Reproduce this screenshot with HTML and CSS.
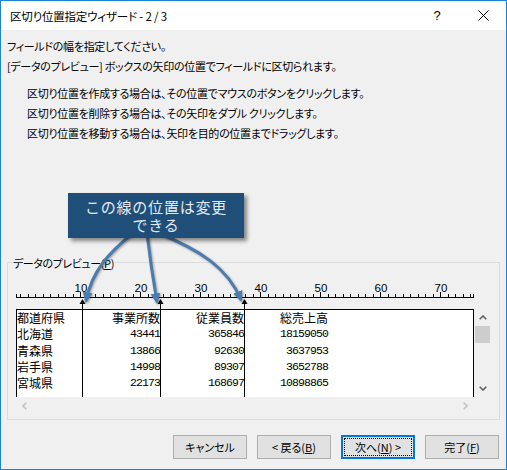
FILE: index.html
```html
<!DOCTYPE html>
<html lang="ja">
<head>
<meta charset="utf-8">
<title>区切り位置指定ウィザード</title>
<link rel="stylesheet" href="styles.css">
</head>
<body>
<div class="window">
  <div class="titlebar">
    <span class="title">区切り位置指定ウィザード - 2 / 3</span>
    <span class="tb-btn help">?</span>
    <span class="tb-btn close">
      <svg width="11" height="11" viewBox="0 0 11 11"><path d="M0.5 0.5L10.5 10.5M10.5 0.5L0.5 10.5" stroke="#000" stroke-width="1" fill="none"/></svg>
    </span>
  </div>
  <div class="body">
    <p class="line">フィールドの幅を指定してください。</p>
    <p class="line">[データのプレビュー] ボックスの矢印の位置でフィールドに区切られます。</p>
    <div class="instructions">
      <p class="line">区切り位置を作成する場合は、その位置でマウスのボタンをクリックします。</p>
      <p class="line">区切り位置を削除する場合は、その矢印をダブル クリックします。</p>
      <p class="line">区切り位置を移動する場合は、矢印を目的の位置までドラッグします。</p>
    </div>
    <div class="group">
      <div class="legend">データのプレビュー(<u>P</u>)</div>
      <div class="preview">
        <svg class="ruler" viewBox="16 278 458 31" width="458" height="31">
          <rect x="16" y="297" width="458" height="1" fill="#000"/>
          <path d="M16.5 294v3M20.5 294v3M28.5 294v3M35.5 294v3M43.5 294v3M50.5 294v3M58.5 294v3M65.5 294v3M73.5 294v3M88.5 294v3M95.5 294v3M103.5 294v3M110.5 294v3M118.5 294v3M125.5 294v3M133.5 294v3M148.5 294v3M155.5 294v3M163.5 294v3M170.5 294v3M178.5 294v3M185.5 294v3M193.5 294v3M208.5 294v3M215.5 294v3M223.5 294v3M230.5 294v3M238.5 294v3M245.5 294v3M253.5 294v3M268.5 294v3M275.5 294v3M283.5 294v3M290.5 294v3M298.5 294v3M305.5 294v3M313.5 294v3M328.5 294v3M335.5 294v3M343.5 294v3M350.5 294v3M358.5 294v3M365.5 294v3M373.5 294v3M388.5 294v3M395.5 294v3M403.5 294v3M410.5 294v3M418.5 294v3M425.5 294v3M433.5 294v3M448.5 294v3M455.5 294v3M463.5 294v3M470.5 294v3M473.5 294v3" stroke="#000" stroke-width="1"/>
          <path d="M80.5 292v5M140.5 292v5M200.5 292v5M260.5 292v5M320.5 292v5M380.5 292v5M440.5 292v5" stroke="#000" stroke-width="1"/>
          <g class="ruler-num">
            <text x="81" y="292">10</text>
            <text x="141" y="292">20</text>
            <text x="201" y="292">30</text>
            <text x="261" y="292">40</text>
            <text x="321" y="292">50</text>
            <text x="381" y="292">60</text>
            <text x="441" y="292">70</text>
          </g>
        </svg>
        <div class="grid">
          <div class="table">
            <div class="row"><span>都道府県</span><span>事業所数</span><span>従業員数</span><span>総売上高</span></div>
            <div class="row"><span>北海道</span><span class="n">43441</span><span class="n">365846</span><span class="n">18159050</span></div>
            <div class="row"><span>青森県</span><span class="n">13866</span><span class="n">92630</span><span class="n">3637953</span></div>
            <div class="row"><span>岩手県</span><span class="n">14998</span><span class="n">89307</span><span class="n">3652788</span></div>
            <div class="row"><span>宮城県</span><span class="n">22173</span><span class="n">168697</span><span class="n">10898865</span></div>
          </div>
          <div class="vscroll">
            <span class="sb-btn"><svg width="8" height="5" viewBox="0 0 8 5"><path d="M0.7 4.3L4 1L7.3 4.3" stroke="#606060" stroke-width="1.6" fill="none"/></svg></span>
            <span class="thumb"></span>
            <span class="sb-space"></span>
            <span class="sb-btn"><svg width="8" height="5" viewBox="0 0 8 5"><path d="M0.7 0.7L4 4L7.3 0.7" stroke="#606060" stroke-width="1.6" fill="none"/></svg></span>
          </div>
          <div class="hscroll">
            <span class="sb-btn"><svg width="5" height="8" viewBox="0 0 5 8"><path d="M4.3 0.7L1 4L4.3 7.3" stroke="#c2c2c2" stroke-width="1.6" fill="none"/></svg></span>
            <span class="sb-btn"><svg width="5" height="8" viewBox="0 0 5 8"><path d="M0.7 0.7L4 4L0.7 7.3" stroke="#c2c2c2" stroke-width="1.6" fill="none"/></svg></span>
          </div>
          <div class="corner"></div>
        </div>
        <svg class="seps" viewBox="16 278 475 136" width="475" height="136">
          <g fill="#000">
            <rect x="82" y="304" width="1" height="93"/>
            <rect x="160" y="304" width="1" height="93"/>
            <rect x="244" y="304" width="1" height="93"/>
            <polygon points="79.5,304 85.5,304 82.5,299"/>
            <polygon points="157.5,304 163.5,304 160.5,299"/>
            <polygon points="241.5,304 247.5,304 244.5,299"/>
          </g>
        </svg>
      </div>
    </div>
  </div>
  <div class="buttons">
    <span class="btn">キャンセル</span>
    <span class="btn">&lt; 戻る(<u>B</u>)</span>
    <span class="btn default">次へ(<u>N</u>) &gt;</span>
    <span class="btn">完了(<u>F</u>)</span>
  </div>
  <svg class="arrows" viewBox="0 0 507 470" width="507" height="470">
    <defs>
      <marker id="ah" viewBox="0 0 10 10" refX="8" refY="5" markerWidth="11" markerHeight="11" orient="auto" markerUnits="userSpaceOnUse">
        <path d="M0,0.5 L10,5 L0,9.5 z" fill="#4a7cae"/>
      </marker>
    </defs>
    <g class="arrow-lines" fill="none" stroke="#4a7cae" stroke-width="3">
      <path d="M133,233 C110,252 92,270 86,301" marker-end="url(#ah)"/>
      <path d="M147,233 Q151,268 157,302" marker-end="url(#ah)"/>
      <path d="M158,233 C200,250 228,268 241,300" marker-end="url(#ah)"/>
    </g>
  </svg>
  <div class="callout"><span class="callout-line">この線の位置は変更</span><span class="callout-line">できる</span></div>
</div>
</body>
</html>
```
FILE: styles.css
```css
body {
  margin: 0;
}

.window {
  position: relative;
  width: 507px;
  height: 470px;
  box-sizing: border-box;
  border: 1px solid #1883d7;
  background: #f0f0f0;
  font-family: "Noto Sans CJK JP", "Liberation Sans", sans-serif;
  font-size: 11px;
  font-feature-settings: "palt";
  letter-spacing: -0.3px;
  color: #000;
  overflow: hidden;
}

.titlebar {
  display: flex;
  align-items: center;
  height: 29px;
  background: #fff;
}

.title {
  flex: 1;
  padding-left: 9px;
  font-size: 11.5px;
  letter-spacing: -0.2px;
  white-space: nowrap;
}

.tb-btn {
  width: 46px;
  height: 29px;
  display: flex;
  align-items: center;
  justify-content: center;
}

.help {
  font-family: "Liberation Sans", sans-serif;
  font-size: 13px;
}

.body {
  padding: 6px 6px 0;
}

.line {
  margin: 0;
  line-height: 20px;
  white-space: nowrap;
}

.instructions {
  margin-top: 7px;
  padding-left: 20px;
}

.group {
  margin-top: 119px;
  height: 158px;
  box-sizing: border-box;
  border: 1px solid #dcdcdc;
  padding: 0 8px;
}

.legend {
  width: fit-content;
  margin: -7px 0 0 -4px;
  padding: 0 1px;
  line-height: 14px;
  letter-spacing: -0.4px;
  background: #f0f0f0;
}

.preview {
  position: relative;
  margin-top: 8px;
  width: 475px;
}

.ruler {
  display: block;
}

.ruler-num text {
  font-family: "Liberation Sans", sans-serif;
  font-size: 11.5px;
  letter-spacing: 0;
  text-anchor: middle;
  fill: #000;
}

.grid {
  display: grid;
  grid-template-columns: 458px 17px;
  grid-template-rows: 88px 17px;
}

.table {
  background: #fff;
  border: 1px solid #000;
  border-bottom: 0;
}

.row {
  display: grid;
  grid-template-columns: 65px 78px 84px 84px;
  height: 16.25px;
  line-height: 16.25px;
  font-size: 12px;
  letter-spacing: 0;
  font-feature-settings: normal;
  white-space: nowrap;
}

.row span:not(:first-child) {
  text-align: right;
}

.row .n {
  font-family: "Liberation Mono", monospace;
  font-size: 11.5px;
  letter-spacing: -0.9px;
}

.vscroll {
  display: flex;
  flex-direction: column;
  align-items: center;
}

.sb-btn {
  width: 17px;
  height: 17px;
  display: flex;
  align-items: center;
  justify-content: center;
}

.thumb {
  width: 15px;
  height: 17px;
  background: #cdcdcd;
}

.sb-space {
  flex: 1;
}

.hscroll {
  display: flex;
  justify-content: space-between;
}

.seps {
  position: absolute;
  left: 0;
  top: 0;
}

.buttons {
  display: flex;
  justify-content: flex-end;
  gap: 10px;
  margin-top: 15px;
  padding-right: 7px;
}

.btn {
  width: 74px;
  height: 24px;
  box-sizing: border-box;
  border: 1px solid #adadad;
  background: #e1e1e1;
  display: flex;
  align-items: center;
  justify-content: center;
  letter-spacing: 0;
  white-space: nowrap;
}

.btn.default {
  border: 2px solid #0078d7;
  outline: 1px dotted #000;
  outline-offset: -4px;
}

.arrows {
  position: absolute;
  left: -1px;
  top: -1px;
  pointer-events: none;
}

.arrow-lines {
  filter: drop-shadow(1px 1px 1px rgba(0, 0, 0, 0.35));
}

.callout {
  position: absolute;
  left: 67px;
  top: 192px;
  width: 176px;
  height: 45px;
  box-sizing: border-box;
  padding-top: 5px;
  display: flex;
  flex-direction: column;
  align-items: center;
  background: #1f4e79;
  box-shadow: 3px 3px 4px rgba(0, 0, 0, 0.45);
  color: #e4ebf2;
  font-size: 15px;
  letter-spacing: 0.8px;
  font-feature-settings: normal;
}

.callout-line {
  display: block;
  height: 17.5px;
  line-height: 17.5px;
  white-space: nowrap;
}
```
